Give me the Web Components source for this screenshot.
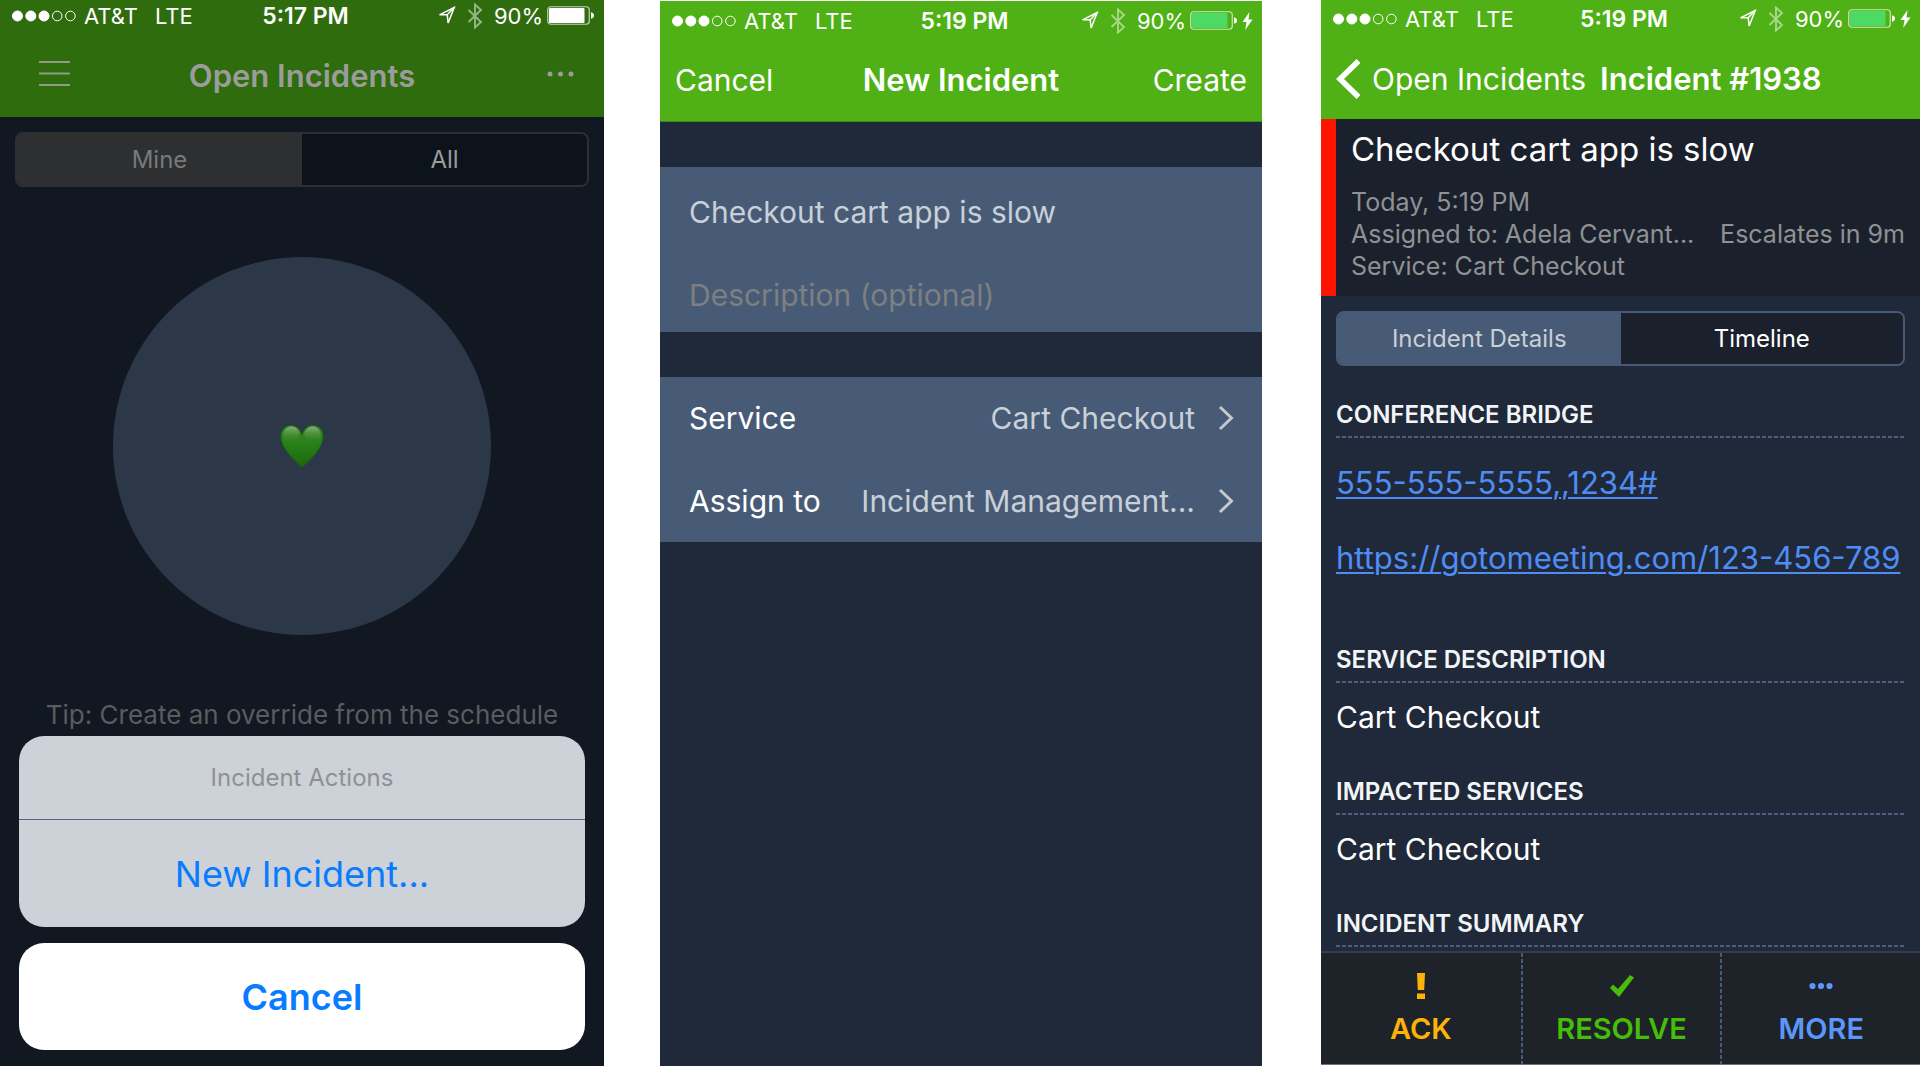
<!DOCTYPE html>
<html lang="en">
<head>
<meta charset="utf-8">
<title>Incident management on mobile</title>
<style>
  body {
    margin: 0;
    background: #fff;
    font-family: Inter, "Liberation Sans", sans-serif;
  }
  .screens {
    display: grid;
    grid-template-columns: 604fr 56fr 602fr 59fr 599fr;
    min-height: 100vh;
  }
  .screens > :nth-child(2) { grid-column: 3; margin-top: 1px; }
  .screens > :nth-child(3) { grid-column: 5; margin-bottom: 2px; }
</style>
</head>
<body>
<main class="screens">
  <open-incidents-screen></open-incidents-screen>
  <new-incident-screen></new-incident-screen>
  <incident-detail-screen></incident-detail-screen>
</main>

<script>
const define = (name, html, setup) => {
  const template = document.createElement('template');
  template.innerHTML = html;
  customElements.define(name, class extends HTMLElement {
    connectedCallback() {
      if (this.shadowRoot) return;
      this.attachShadow({ mode: 'open' }).append(template.content.cloneNode(true));
      if (setup) setup(this, this.shadowRoot);
    }
  });
};

const reset = `
  *, *::before, *::after { box-sizing: border-box; }
  button, input { font: inherit; color: inherit; background: none; border: 0; margin: 0; padding: 0; }
  button { cursor: pointer; }
  svg { display: block; flex: none; }
  h1, h2, p { margin: 0; font: inherit; }
`;

define('status-bar', `
  <style>${reset}
    :host { display: grid; grid-template-columns: 1fr auto 1fr; align-items: center;
      height: var(--status-height); padding: 0 9px 0 12px; color: #fff; font-size: 22px; line-height: 28px; }
    .carrier, .indicators { display: flex; align-items: center; }
    .carrier { gap: 8px; }
    .network { margin-left: 9px; }
    .time { font-size: 23px; font-weight: 600; padding-left: 4px; }
    .indicators { justify-content: flex-end; }
    .bluetooth { margin: 0 11px; opacity: .5; }
    .battery { margin-left: 4px; }
    .bolt { display: none; margin-left: 4px; }
    :host([charging]) .bolt { display: block; }
    :host([charging]) .charge { fill: #4cd964; }
  </style>
  <div class="carrier">
    <svg width="64" height="12" viewBox="0 0 64 12" fill="#fff" stroke="#fff">
      <circle cx="5.5" cy="6" r="5"/><circle cx="18.8" cy="6" r="5"/><circle cx="32" cy="6" r="5"/>
      <circle cx="45.2" cy="6" r="4.8" fill="none"/><circle cx="58.4" cy="6" r="4.8" fill="none"/>
    </svg>
    <span>AT&amp;T</span><span class="network">LTE</span>
  </div>
  <span class="time"></span>
  <div class="indicators">
    <svg width="19" height="20" viewBox="0 0 19 20" fill="none" stroke="#fff" stroke-width="1.5"><path d="M17.200 1.500 2.500 8.800h7.700l.9 8.200z"/><path d="M17.200 1.500 10.200 8.800"/></svg>
    <svg class="bluetooth" width="16" height="26" viewBox="0 0 16 26" fill="none" stroke="#fff" stroke-width="1.9"><path d="M1.5 7 14 19l-6 5.500V1.500L14 7 1.500 19"/></svg>
    <span>90%</span>
    <svg class="battery" width="48" height="20" viewBox="0 0 48 20">
      <rect x=".75" y=".75" width="41.500" height="17.500" rx="3" fill="none" stroke="#fff" stroke-opacity=".7" stroke-width="1.200"/>
      <rect class="charge" x="2" y="2" width="35.500" height="15" rx="1" fill="#fff"/>
      <path d="M44 6.200c4 .8 4 5.800 0 6.600z" fill="#fff"/>
    </svg>
    <svg class="bolt" width="11" height="20" viewBox="0 0 11 20" fill="#fff"><path d="M7.500 1 .5 11h4L3.200 19l7.300-10.500H6.500z"/></svg>
  </div>
`, (host, root) => { root.querySelector('.time').textContent = host.getAttribute('time'); });

define('nav-bar', `
  <style>${reset}
    :host { display: flex; align-items: center; justify-content: space-between; height: var(--nav-height);
      box-sizing: border-box; padding: var(--nav-padding, 0 15px); font-size: 30px; line-height: 40px; }
    .side { flex: 1; display: flex; }
    .end { justify-content: flex-end; }
    :host([compact]) { justify-content: flex-start; }
    :host([compact]) .side { flex: none; }
    :host([compact]) .end { display: none; }
    h1 { font-size: 31px; font-weight: 600; white-space: nowrap; }
  </style>
  <div class="side"><slot name="start"></slot></div>
  <h1><slot></slot></h1>
  <div class="side end"><slot name="end"></slot></div>
`);

define('segment-control', `
  <style>${reset}
    :host { display: flex; height: 55px; border: 2px solid var(--segment-line); border-radius: 8px;
      overflow: hidden; box-sizing: border-box; font-size: 24px; }
    button { flex: 1; background: var(--segment-bg); color: var(--segment-text); }
    button[aria-selected="true"] { background: var(--segment-line); color: var(--segment-active); }
  </style>
`, (host, root) => {
  host.setAttribute('role', 'tablist');
  host.getAttribute('options').split('|').forEach((label, i) => {
    const b = document.createElement('button');
    b.type = 'button';
    b.setAttribute('role', 'tab');
    b.setAttribute('aria-selected', i === 0);
    b.textContent = label;
    b.onclick = () => root.querySelectorAll('button').forEach(o => o.setAttribute('aria-selected', o === b));
    root.append(b);
  });
});

define('action-sheet', `
  <style>${reset}
    :host { position: absolute; left: 19px; right: 19px; bottom: 17px; display: flex; flex-direction: column; gap: 16px; }
    .group { border-radius: 25px; overflow: hidden; background: #cdd1d8; }
    p { display: flex; align-items: center; justify-content: center; height: 84px; font-size: 24px;
      color: #8e9193; border-bottom: 1px solid #4f6283; }
    button { display: block; width: 100%; height: 107px; color: #087bff; font-size: 36px; }
    .cancel { border-radius: 25px; background: #fff; font-weight: 600; }
  </style>
  <div class="group">
    <p><slot></slot></p>
    <button type="button"><slot name="action"></slot></button>
  </div>
  <button class="cancel" type="button">Cancel</button>
`);

define('open-incidents-screen', `
  <style>${reset}
    :host { display: flex; flex-direction: column; position: relative; background: #121822;
      --status-height: 31px; --nav-height: 86px; --nav-padding: 4px 28px 0;
      --segment-line: #2e2f31; --segment-bg: #0d131b; --segment-text: #9b9c9d; --segment-active: #77797c; }
    header { background: #2f6c0e; color: #9c9c9c; }
    .menu { padding-left: 11px; }
    segment-control { margin: 15px 15px 0; }
    .status { display: flex; align-items: center; justify-content: center; align-self: center;
      width: 62.5%; aspect-ratio: 1; margin-top: 70px; border-radius: 50%; background: #2c3747; }
    .tip { margin-top: 64px; text-align: center; font-size: 26px; line-height: 32px; color: #5a5c5e; }
  </style>
  <header>
    <status-bar time="5:17 PM"></status-bar>
    <nav-bar>
      <button class="menu" slot="start" type="button" aria-label="Menu"><svg width="32" height="32" viewBox="0 0 32 32" stroke="#8f9c86" stroke-width="2"><path d="M0 2h31M0 13.500h31M0 25h31"/></svg></button>
      Open Incidents
      <button slot="end" type="button" aria-label="Incident actions"><svg width="30" height="32" viewBox="0 0 30 32" fill="#9c9c9c"><circle cx="4" cy="14" r="2.500"/><circle cx="14.500" cy="14" r="2.500"/><circle cx="25" cy="14" r="2.500"/></svg></button>
    </nav-bar>
  </header>
  <segment-control options="Mine|All"></segment-control>
  <div class="status">
    <svg width="44" height="44" viewBox="0 0 44 44" role="img" aria-label="All clear">
      <defs>
        <linearGradient id="body" x1="0" y1="0" x2="0" y2="1"><stop offset="0" stop-color="#3e8a24"/><stop offset=".5" stop-color="#257f19"/><stop offset="1" stop-color="#1f6408"/></linearGradient>
        <linearGradient id="shine" x1="0" y1="0" x2="0" y2="1"><stop offset="0" stop-color="#a3b79b" stop-opacity=".75"/><stop offset="1" stop-color="#4a8a35" stop-opacity="0"/></linearGradient>
      </defs>
      <path fill="url(#body)" stroke="#127006" stroke-width="1" d="M22 43C14 36 1 24 1 12.500 1 5.500 5.500 1.500 11 1.500c5 0 9 3.500 11 9.500 2-6 6-9.500 11-9.500 5.500 0 10 4 10 11C43 24 30 36 22 43z"/>
      <ellipse cx="11.500" cy="10" rx="8" ry="7.500" fill="url(#shine)"/>
      <ellipse cx="32.500" cy="10" rx="8" ry="7.500" fill="url(#shine)"/>
    </svg>
  </div>
  <p class="tip">Tip: Create an override from the schedule</p>
  <action-sheet>Incident Actions<span slot="action">New Incident...</span></action-sheet>
`);

define('form-group', `
  <style>
    :host { display: flex; flex-direction: column; margin-top: 45px; background: #485b76;
      height: 165px; box-sizing: border-box; }
  </style>
  <slot></slot>
`);

define('picker-row', `
  <style>${reset}
    :host { flex: 1; display: flex; }
    button { flex: 1; display: flex; align-items: center; justify-content: space-between;
      padding: 0 28px 0 29px; color: #fff; white-space: nowrap; }
    .value { margin-left: auto; margin-right: 23px; color: #c9d0d8; }
  </style>
  <button type="button">
    <span><slot></slot></span>
    <span class="value"><slot name="value"></slot></span>
    <svg width="16" height="26" viewBox="0 0 16 26" fill="none" stroke="#c6c8cc" stroke-width="3"><path d="M2 2 13.500 13 2 24"/></svg>
  </button>
`);

define('text-row', `
  <style>${reset}
    :host { flex: 1; display: flex; }
    input { flex: 1; min-width: 0; padding: 8px 29px 0; color: #c9d0d8; outline: 0; }
    input::placeholder { color: #7e7f80; opacity: 1; }
  </style>
  <input type="text">
`, (host, root) => {
  const input = root.querySelector('input');
  input.setAttribute('aria-label', host.getAttribute('label'));
  input.placeholder = host.getAttribute('placeholder') || '';
  input.value = host.getAttribute('value') || '';
});

define('new-incident-screen', `
  <style>${reset}
    :host { display: block; background: #202939; font-size: 30px; --status-height: 39px; --nav-height: 81px; --nav-padding: 0 15px 1px; }
    header { background: #4fb115; color: #fff; border-bottom: 1px solid #3d8a17; }
  </style>
  <header>
    <status-bar time="5:19 PM" charging></status-bar>
    <nav-bar>
      <button slot="start" type="button">Cancel</button>
      New Incident
      <button slot="end" type="button">Create</button>
    </nav-bar>
  </header>
  <form-group>
    <text-row label="Title" value="Checkout cart app is slow"></text-row>
    <text-row label="Description" placeholder="Description (optional)"></text-row>
  </form-group>
  <form-group>
    <picker-row>Service<span slot="value">Cart Checkout</span></picker-row>
    <picker-row>Assign to<span slot="value">Incident Management...</span></picker-row>
  </form-group>
`);

define('incident-summary', `
  <style>${reset}
    :host { display: block; border-left: 15px solid #ff1200; background: #1b212c; padding: 10px 15px 14px 15px;
      color: #8f9194; font-size: 25px; line-height: 32px; }
    h2 { margin-bottom: 17px; color: #fff; font-size: 33px; line-height: 40px; }
    .row { display: flex; justify-content: space-between; white-space: nowrap; }
  </style>
  <h2><slot></slot></h2>
  <p>Today, 5:19 PM</p>
  <p class="row"><span>Assigned to: Adela Cervant...</span><span>Escalates in 9m</span></p>
  <p>Service: Cart Checkout</p>
`);

define('detail-section', `
  <style>${reset}
    :host { display: block; margin: 0 15px; color: #fff; }
    h2 { font-size: 24px; line-height: 30px; font-weight: 600; padding-bottom: 6px; color: #f2f5f8; }
    .rule { height: 2px; background: repeating-linear-gradient(90deg, #4a5f80 0 4px, transparent 4px 6px); }
    .content { display: flex; flex-direction: column; align-items: flex-start; gap: 39px;
      padding: 16px 0 42px; font-size: 30px; line-height: 36px; }
    :host([links]) .content { padding: 27px 0 69px; font-size: 31px; }
    :host([last]) .content { padding: 4px 0 0; }
    ::slotted(a) { color: #4f8df5; text-decoration-thickness: 2px; text-underline-offset: 3px; }
  </style>
  <h2></h2>
  <div class="rule"></div>
  <div class="content"><slot></slot></div>
`, (host, root) => { root.querySelector('h2').textContent = host.getAttribute('heading'); });

define('bar-action', `
  <style>${reset}
    :host { flex: 1; display: flex; }
    :host(:not(:first-child))::before { content: ""; width: 2px;
      background: repeating-linear-gradient(#465a7b 0 4px, transparent 4px 6px); }
    button { flex: 1; display: flex; flex-direction: column; align-items: center; gap: 11px; padding-top: 17px;
      font-size: 29px; line-height: 32px; font-weight: 600; }
    .icon { display: flex; align-items: center; height: 32px; }
  </style>
  <button type="button"><span class="icon"><slot name="icon"></slot></span><span><slot></slot></span></button>
`);

define('incident-detail-screen', `
  <style>${reset}
    :host { display: flex; flex-direction: column; background: #202939; --status-height: 38px; --nav-height: 81px;
      --segment-line: #485b76; --segment-bg: #1a202c; --segment-text: #fff; --segment-active: #c9d0d8; }
    header { background: #4fb115; color: #fff; }
    .back { display: flex; align-items: center; gap: 12px; margin-right: 14px; color: #fff; text-decoration: none; }
    segment-control { margin: 15px 15px 34px; }
    .content { flex: 1; }
    footer { display: flex; height: 114px; border-top: 2px solid #343e50; border-bottom: 1px solid #6d7075; background: #1e2229; }
  </style>
  <header>
    <status-bar time="5:19 PM" charging></status-bar>
    <nav-bar compact>
      <a class="back" slot="start" href="#open-incidents"><svg width="24" height="40" viewBox="0 0 24 40" fill="none" stroke="#fff" stroke-width="5.500"><path d="M22.500 2 4 20l18.500 18"/></svg>Open Incidents</a>
      Incident #1938
    </nav-bar>
  </header>
  <incident-summary>Checkout cart app is slow</incident-summary>
  <segment-control options="Incident Details|Timeline"></segment-control>
  <div class="content">
    <detail-section heading="CONFERENCE BRIDGE" links><a href="tel:555-555-5555,,1234#">555-555-5555,,1234#</a><a href="https://gotomeeting.com/123-456-789">https://gotomeeting.com/123-456-789</a></detail-section>
    <detail-section heading="SERVICE DESCRIPTION">Cart Checkout</detail-section>
    <detail-section heading="IMPACTED SERVICES">Cart Checkout</detail-section>
    <detail-section heading="INCIDENT SUMMARY" last></detail-section>
  </div>
  <footer>
    <bar-action style="color:#fdb20a"><svg slot="icon" width="10" height="28" viewBox="0 0 10 28" fill="currentColor"><path d="M1 1h8l-.8 17H1.800zM1 21.500h8V27H1z"/></svg>ACK</bar-action>
    <bar-action style="color:#45bd09"><svg slot="icon" width="26" height="24" viewBox="0 0 26 24" fill="currentColor"><path d="m1 14 3-3.500 5 4.500L21 1l4 2.500L10 23z"/></svg>RESOLVE</bar-action>
    <bar-action style="color:#5b97f9"><svg slot="icon" width="24" height="8" viewBox="0 0 24 8" fill="currentColor"><circle cx="3.500" cy="4" r="3.100"/><circle cx="12" cy="4" r="3.100"/><circle cx="20.500" cy="4" r="3.100"/></svg>MORE</bar-action>
  </footer>
`);
</script>
</body>
</html>
